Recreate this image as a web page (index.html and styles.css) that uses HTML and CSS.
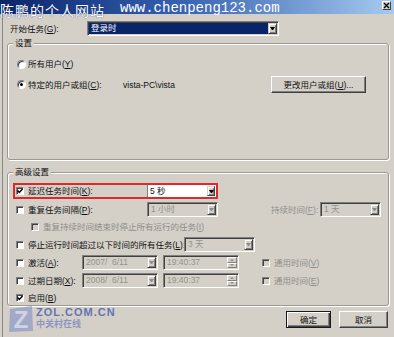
FILE: index.html
```html
<!DOCTYPE html>
<html lang="zh-CN">
<head>
<meta charset="utf-8">
<title>新建触发器</title>
<link rel="stylesheet" href="styles.css">
</head>
<body>
<div class="dialog">
  <div class="titlebar">
    <span class="wm-cn">陈鹏的个人网站</span>
    <span class="wm-url">www.chenpeng123.com</span>
    <span class="close"><svg width="7" height="7" viewBox="0 0 7 7"><path d="M1 1 L6 6 M6 1 L1 6" stroke="#000" stroke-width="1.4"/></svg></span>
  </div>
  <div class="content">
    <div class="start-row">
      <span class="start-label">开始任务(<u>G</u>):</span>
      <div class="select w-start"><span class="val focus">登录时</span><span class="arrow"></span></div>
    </div>

    <div class="group g-settings">
      <span class="group-title">设置</span>
      <div class="radio-row r1"><span class="radio"></span><span>所有用户(<u>Y</u>)</span></div>
      <div class="radio-row r2">
        <span class="radio checked"></span>
        <span class="rlabel">特定的用户或组(<u>C</u>):</span>
        <span class="user">vista-PC\vista</span>
        <button class="btn btn-user">更改用户或组(<u>U</u>)...</button>
      </div>
    </div>

    <div class="group g-adv">
      <span class="group-title">高级设置</span>
      <div class="adv-rows">
        <div class="row row-red h16">
          <span class="cb"><svg width="6" height="6" viewBox="0 0 6 6"><path d="M0.6 2.6 L2.3 4.4 L5.5 0.9" fill="none" stroke="#000" stroke-width="1.4"/></svg></span>
          <span class="lbl w119">延迟任务时间(<u>K</u>):</span>
          <div class="select sel-red"><span class="val">5 秒</span><span class="arrow"></span></div>
        </div>
        <div class="row h15">
          <span class="cb"></span>
          <span class="lbl w119">重复任务间隔(<u>P</u>):</span>
          <div class="select dis w71"><span class="val">1 小时</span><span class="arrow"></span></div>
          <span class="lbl dis-text dur">持续时间(<u>F</u>):</span>
          <div class="select dis w61"><span class="val">1 天</span><span class="arrow"></span></div>
        </div>
        <div class="row h14 sub">
          <span class="cb cb-dis"></span>
          <span class="dis-text">重复持续时间结束时停止所有运行的任务(<u>I</u>)</span>
        </div>
        <div class="row h15">
          <span class="cb"></span>
          <span class="lbl w156">停止运行时间超过以下时间的所有任务(<u>L</u>):</span>
          <div class="select dis w71"><span class="val">3 天</span><span class="arrow"></span></div>
        </div>
        <div class="row h15">
          <span class="cb"></span>
          <span class="lbl w54">激活(<u>A</u>):</span>
          <div class="select dis w76"><span class="val pre">2007/  6/11</span><span class="arrow"></span></div>
          <div class="select dis w76 time"><span class="val">19:40:37</span><span class="spin"><span class="up"></span><span class="down"></span></span></div>
          <span class="cb cb-dis utc"></span>
          <span class="dis-text">通用时间(<u>V</u>)</span>
        </div>
        <div class="row h15">
          <span class="cb"></span>
          <span class="lbl w54">过期日期(<u>X</u>):</span>
          <div class="select dis w76"><span class="val pre">2008/  6/11</span><span class="arrow"></span></div>
          <div class="select dis w76 time"><span class="val">19:40:37</span><span class="spin"><span class="up"></span><span class="down"></span></span></div>
          <span class="cb cb-dis utc"></span>
          <span class="dis-text">通用时间(<u>E</u>)</span>
        </div>
        <div class="row h14">
          <span class="cb"><svg width="6" height="6" viewBox="0 0 6 6"><path d="M0.6 2.6 L2.3 4.4 L5.5 0.9" fill="none" stroke="#000" stroke-width="1.4"/></svg></span>
          <span>启用(<u>B</u>)</span>
        </div>
      </div>
    </div>

    <div class="btn-row">
      <button class="btn btn-ok">确定</button>
      <button class="btn btn-cancel">取消</button>
    </div>
  </div>

  <div class="zol">
    <svg class="zol-logo" width="26" height="28" viewBox="0 0 26 28">
      <polygon points="2,4 24,1 25,26 1,27" fill="#8190c6" opacity="0.6"/>
      <text x="13" y="23" text-anchor="middle" font-family="Liberation Sans, sans-serif" font-weight="bold" font-size="24" fill="#cfd3e4">Z</text>
    </svg>
    <div class="zol-text">
      <span class="zol-en">ZOL.COM.CN</span>
      <span class="zol-cn">中关村在线</span>
    </div>
  </div>
</div>
</body>
</html>
```

FILE: styles.css
```css
* { box-sizing: border-box; }
html, body { margin: 0; padding: 0; }
body {
  width: 394px;
  height: 337px;
  overflow: hidden;
  background: #d4d0c8;
  font-family: "Liberation Sans", "Noto Sans CJK SC", sans-serif;
  font-size: 8.5px;
  line-height: 12px;
  color: #111;
}
u { text-decoration: underline; text-underline-offset: 1px; }

.dialog {
  position: relative;
  width: 394px;
  height: 337px;
  display: flex;
  flex-direction: column;
}

/* title bar */
.titlebar {
  flex: 0 0 14px;
  height: 14px;
  display: flex;
  align-items: flex-start;
  background: linear-gradient(to right, #0a246a 0%, #3560b0 45%, #a6caf0 100%);
  position: relative;
  z-index: 2;
}
.wm-cn {
  width: 120px;
  font-family: "Noto Sans CJK SC", sans-serif;
  font-size: 14px;
  line-height: 20px;
  letter-spacing: 1px;
  color: #fff;
  white-space: nowrap;
  text-shadow: 0 0 1px #0a246a;
}
.wm-url {
  font-family: "Liberation Mono", monospace;
  font-size: 14px;
  line-height: 16px;
  color: #fff;
  white-space: nowrap;
}
.close {
  margin: 1px 3px 0 auto;
  width: 9px;
  height: 9px;
  background: #d4d0c8;
  border: 1px solid;
  border-color: #fff #404040 #404040 #fff;
  display: flex;
  align-items: center;
  justify-content: center;
}

/* content */
.content {
  flex: 1;
  margin-left: 2px;
  border-left: 1px solid #8a8884;
  padding: 7px 5px 0 4px;
  display: flex;
  flex-direction: column;
}
.start-row {
  display: flex;
  align-items: center;
  height: 15px;
  padding-left: 3px;
}
.start-label { width: 77px; }
.w-start { width: 192px; }

/* select / field */
.select {
  display: flex;
  align-items: stretch;
  height: 15px;
  border: 1px solid;
  border-color: #808080 #fff #fff #808080;
  box-shadow: inset 1px 1px 0 #404040, inset -1px -1px 0 #d4d0c8;
  background: #fff;
  padding: 1px;
  flex: none;
}
.select .val {
  flex: 1;
  padding-left: 2px;
  line-height: 11px;
  white-space: nowrap;
  overflow: hidden;
}
.select .val.pre { white-space: pre; }
.select .val.focus {
  background: #0a246a;
  color: #fff;
}
.arrow {
  width: 9px;
  flex: none;
  background: #d4d0c8;
  border: 1px solid;
  border-color: #d4d0c8 #404040 #404040 #d4d0c8;
  box-shadow: inset 1px 1px 0 #fff, inset -1px -1px 0 #808080;
  display: flex;
  align-items: center;
  justify-content: center;
}
.arrow::after {
  content: "";
  width: 1px;
  height: 0;
  border-left: 2px solid transparent;
  border-right: 2px solid transparent;
  border-top: 3px solid #000;
}
.select.dis { background: #d4d0c8; }
.select.dis .val { color: #94928d; }
.select.dis .arrow::after { border-top-color: #8e8c88; }

.sel-red {
  width: 69px;
  height: 12px;
  border: none;
  border-left: 1px solid #808080;
  box-shadow: none;
  padding: 0 1px 0 0;
}
.sel-red .val { line-height: 12px; }
.sel-red .arrow { width: 8px; margin: 1px 0; }

.w71 { width: 71px; }
.w61 { width: 61px; }
.w76 { width: 76px; }
.time { margin-left: 5px; }
.spin {
  width: 10px;
  flex: none;
  display: flex;
  flex-direction: column;
}
.spin span {
  flex: 1;
  background: #d4d0c8;
  border: 1px solid;
  border-color: #fff #808080 #808080 #fff;
  display: flex;
  align-items: center;
  justify-content: center;
}
.spin .up::after {
  content: "";
  width: 0; height: 0;
  border-left: 2px solid transparent;
  border-right: 2px solid transparent;
  border-bottom: 2px solid #8e8c88;
}
.spin .down::after {
  content: "";
  width: 0; height: 0;
  border-left: 2px solid transparent;
  border-right: 2px solid transparent;
  border-top: 2px solid #8e8c88;
}

/* groups */
.group {
  border: 1px solid #9c9993;
  border-radius: 3px;
  box-shadow: inset 1px 1px 0 #fff, 1px 1px 0 #fff;
  display: flex;
  flex-direction: column;
}
.group-title {
  align-self: flex-start;
  margin: -7px 0 0 5px;
  padding: 0 2px;
  background: #d4d0c8;
  line-height: 12px;
}
.g-settings {
  margin-top: 7px;
  height: 117px;
}
.radio-row {
  display: flex;
  align-items: center;
  margin-left: 9px;
}
.r1 { height: 12px; margin-top: 9px; }
.r2 { height: 17px; margin-top: 6px; }
.radio {
  width: 9px;
  height: 9px;
  border-radius: 50%;
  border: 1px solid;
  border-color: #808080 #fff #fff #808080;
  box-shadow: inset 1px 1px 0 #404040;
  background: #fff;
  margin-right: 2px;
  display: flex;
  align-items: center;
  justify-content: center;
  flex: none;
}
.radio.checked::after {
  content: "";
  width: 3px;
  height: 3px;
  border-radius: 50%;
  background: #000;
}
.rlabel { width: 95px; }
.user { width: 148px; }
.btn {
  font: inherit;
  color: #111;
  background: #d4d0c8;
  border: 1px solid;
  border-color: #fff #404040 #404040 #fff;
  box-shadow: inset -1px -1px 0 #808080;
  padding: 0;
  margin: 0;
  display: flex;
  align-items: center;
  justify-content: center;
  line-height: 12px;
}
.btn-user { width: 95px; height: 17px; }

.g-adv {
  margin-top: 12px;
  height: 134px;
}
.adv-rows {
  display: flex;
  flex-direction: column;
  gap: 3px;
  margin: 5px 0 0 5px;
}
.row {
  display: flex;
  align-items: center;
  padding-left: 3px;
}
.h16 { height: 16px; }
.h15 { height: 15px; }
.h14 { height: 14px; }
.row-red {
  width: 205px;
  border: 2px solid #dc2a2a;
  padding-left: 1px;
}
.sub { padding-left: 18px; }
.cb {
  width: 8px;
  height: 8px;
  flex: none;
  border: 1px solid;
  border-color: #808080 #fff #fff #808080;
  box-shadow: inset 1px 1px 0 #404040;
  background: #fff;
  margin-right: 4px;
  display: flex;
  align-items: center;
  justify-content: center;
}
.cb svg { display: block; }
.cb-dis { background: #d4d0c8; }
.utc { margin-left: 23px; }
.lbl { flex: none; white-space: nowrap; }
.w119 { width: 119px; }
.w156 { width: 156px; }
.w54 { width: 54px; }
.dur { margin-left: 53px; width: 49px; }
.dis-text { color: #8f8d89; white-space: nowrap; }

/* buttons */
.btn-row {
  display: flex;
  justify-content: flex-end;
  gap: 8px;
  margin-top: 5px;
  padding-right: 1px;
}
.btn-ok {
  width: 45px;
  height: 17px;
  border: 1px solid #1a1a1a;
  box-shadow: inset 1px 1px 0 #fff, inset -1px -1px 0 #404040, inset -2px -2px 0 #808080;
}
.btn-cancel { width: 49px; height: 17px; }

/* ZOL watermark overlay */
.zol {
  position: absolute;
  left: 8px;
  top: 305px;
  display: flex;
  align-items: flex-start;
  gap: 2px;
  pointer-events: none;
}
.zol-logo { display: block; }
.zol-text {
  display: flex;
  flex-direction: column;
  gap: 1px;
  margin-top: 2px;
}
.zol-en {
  font-family: "Liberation Sans", sans-serif;
  font-weight: bold;
  font-size: 11px;
  line-height: 11px;
  letter-spacing: 1px;
  color: #6673b2;
}
.zol-cn {
  font-family: "Noto Sans CJK SC", sans-serif;
  font-weight: bold;
  font-size: 9px;
  line-height: 10px;
  color: #8c94c4;
}
```
